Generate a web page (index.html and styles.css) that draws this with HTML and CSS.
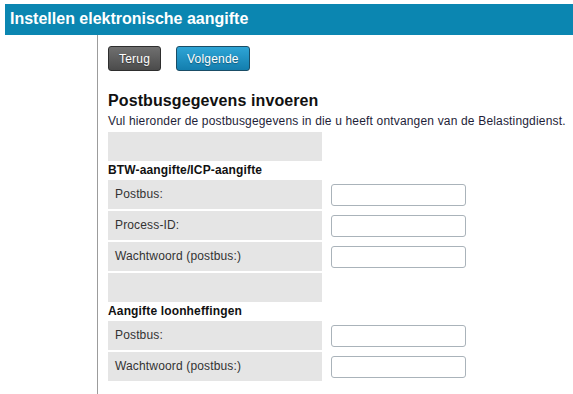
FILE: index.html
```html
<!DOCTYPE html>
<html lang="nl">
<head>
    <meta charset="UTF-8">
    <meta name="viewport" content="width=device-width, initial-scale=1.0">
    <title>Instellen elektronische aangifte</title>
    <link rel="stylesheet" href="styles.css">
</head>
<body>
    <div class="page-header">Instellen elektronische aangifte</div>

    <div class="page">
        <div class="sidebar"></div>

        <div class="content">
            <div class="buttons">
                <button class="btn btn-back">Terug</button>
                <button class="btn btn-next">Volgende</button>
            </div>

            <h2>Postbusgegevens invoeren</h2>
            <p class="intro">Vul hieronder de postbusgegevens in die u heeft ontvangen van de Belastingdienst.</p>

            <div class="form-grid">
                <div class="label-cell"></div>
                <div></div>

                <div class="section-title">BTW-aangifte/ICP-aangifte</div>

                <div class="label-cell">Postbus:</div>
                <input type="text" id="btwPostbus">

                <div class="label-cell">Process-ID:</div>
                <input type="text" id="btwProcessId">

                <div class="label-cell">Wachtwoord (postbus:)</div>
                <input type="password" id="btwPassword">

                <div class="label-cell"></div>
                <div></div>

                <div class="section-title">Aangifte loonheffingen</div>

                <div class="label-cell">Postbus:</div>
                <input type="text" id="lhPostbus">

                <div class="label-cell">Wachtwoord (postbus:)</div>
                <input type="password" id="lhPassword">
            </div>
        </div>
    </div>
</body>
</html>
```

FILE: styles.css
```css
body {
    font-family: "Liberation Sans", Arial, sans-serif;
    margin: 0;
    padding-top: 4px;
    background: #fff;
    color: #222;
}
.page-header {
    margin-left: 5px;
    height: 31px;
    line-height: 30px;
    padding-left: 5px;
    background-color: #0b86b1;
    color: #fff;
    font-size: 16px;
    font-weight: bold;
}
.page {
    display: flex;
    min-height: 359px;
}
.sidebar {
    width: 97px;
    flex-shrink: 0;
}
.content {
    border-left: 1px solid #9c9c9c;
    padding: 11px 0 10px 10px;
}
.buttons {
    display: flex;
    gap: 15px;
}
.btn {
    height: 25px;
    padding: 0 10px;
    border-radius: 3px;
    font-family: inherit;
    font-size: 12px;
    letter-spacing: 0.2px;
    color: #fff;
    text-shadow: 0 1px 1px rgba(0, 0, 0, 0.35);
    cursor: pointer;
}
.btn-back {
    border: 1px solid #2e2e2e;
    background: linear-gradient(#707070, #4b4b4b);
}
.btn-next {
    border: 1px solid #1a4d66;
    background: linear-gradient(#2ea5d6, #137eae);
}
h2 {
    margin: 20px 0 0;
    font-size: 16px;
    line-height: 20px;
    letter-spacing: 0.1px;
    color: #111;
}
.intro {
    margin: 3px 0 0;
    font-size: 12px;
    line-height: 15px;
    letter-spacing: 0.17px;
    color: #1e1e38;
}
.form-grid {
    display: grid;
    grid-template-columns: 214px 135px;
    column-gap: 9px;
    row-gap: 2px;
    margin-top: 3px;
    font-size: 12px;
    letter-spacing: 0.15px;
}
.label-cell {
    height: 29px;
    line-height: 29px;
    padding-left: 7px;
    background: #e5e5e5;
    color: #333;
}
.section-title {
    grid-column: 1 / 3;
    line-height: 15px;
    font-weight: bold;
    color: #111;
}
.form-grid input {
    align-self: center;
    height: 22px;
    box-sizing: border-box;
    border: 1px solid #aab3ba;
    border-radius: 3px;
    padding: 2px 4px;
    font-size: 12px;
}
```
